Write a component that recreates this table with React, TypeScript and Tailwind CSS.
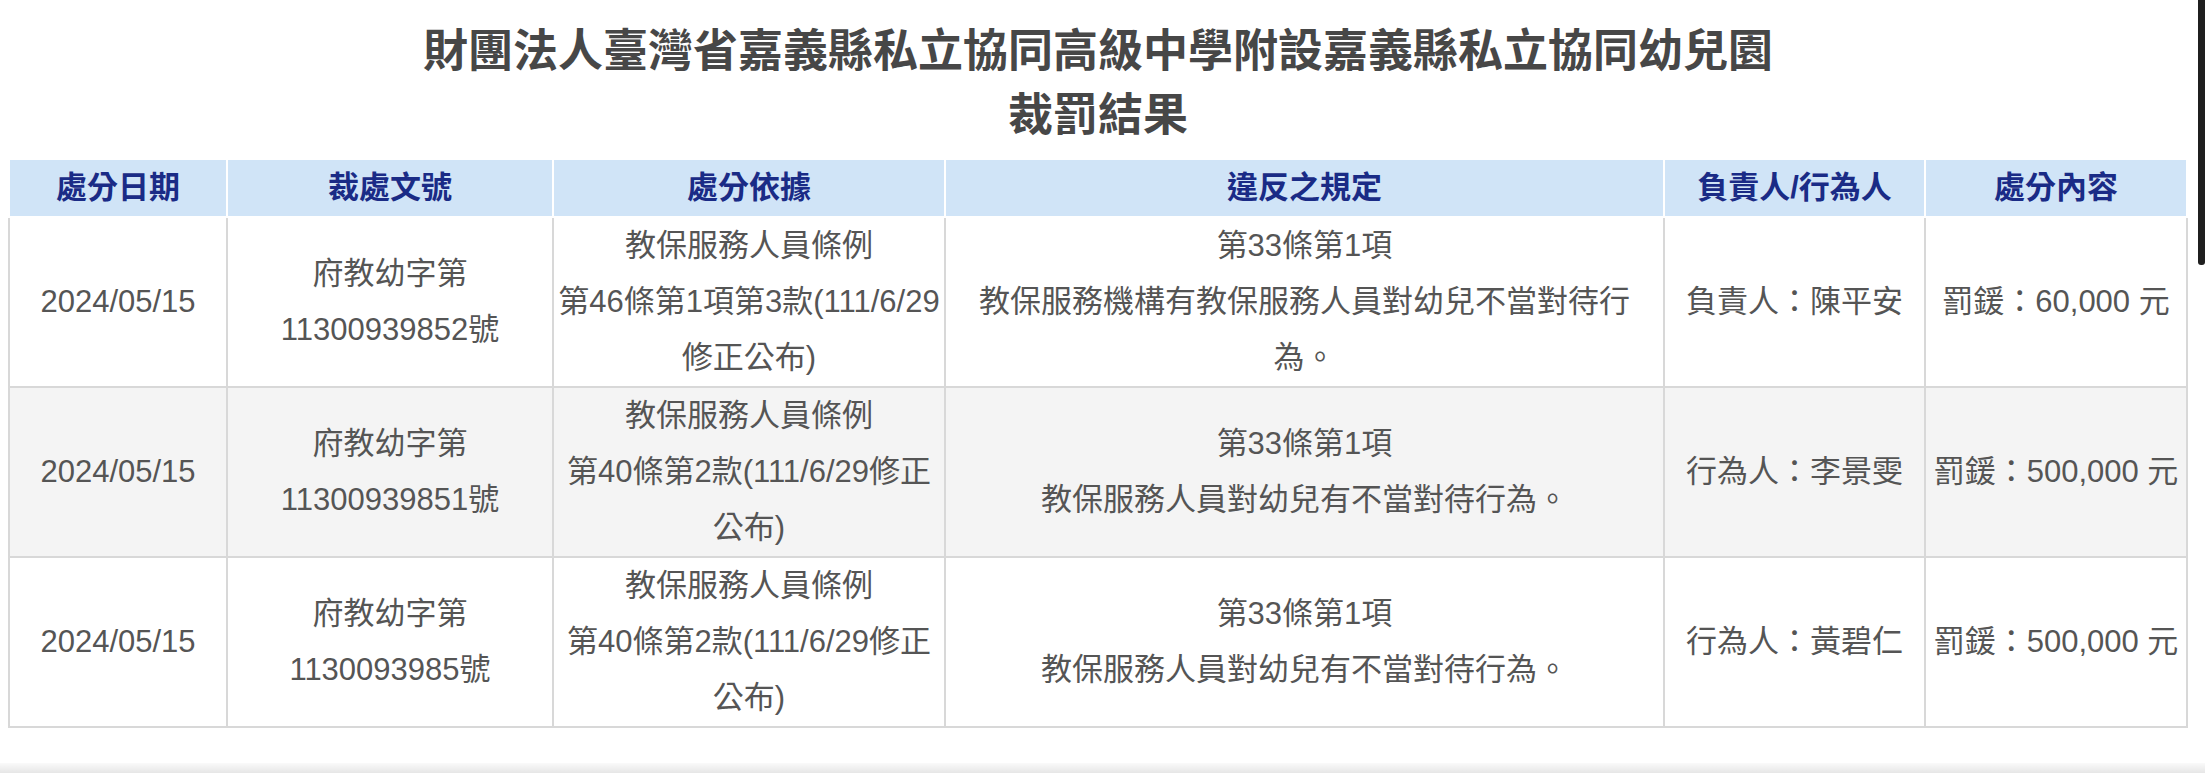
import React from "react";

type Row = {
  date: string;
  doc: string[];
  basis: string[];
  rule: string[];
  person: string;
  penalty: string;
  bg: string;
};

const rows: Row[] = [
  {
    date: "2024/05/15",
    doc: ["府教幼字第", "11300939852號"],
    basis: ["教保服務人員條例", "第46條第1項第3款(111/6/29", "修正公布)"],
    rule: ["第33條第1項", "教保服務機構有教保服務人員對幼兒不當對待行", "為。"],
    person: "負責人：陳平安",
    penalty: "罰鍰：60,000 元",
    bg: "bg-white",
  },
  {
    date: "2024/05/15",
    doc: ["府教幼字第", "11300939851號"],
    basis: ["教保服務人員條例", "第40條第2款(111/6/29修正", "公布)"],
    rule: ["第33條第1項", "教保服務人員對幼兒有不當對待行為。"],
    person: "行為人：李景雯",
    penalty: "罰鍰：500,000 元",
    bg: "bg-[#f4f4f4]",
  },
  {
    date: "2024/05/15",
    doc: ["府教幼字第", "1130093985號"],
    basis: ["教保服務人員條例", "第40條第2款(111/6/29修正", "公布)"],
    rule: ["第33條第1項", "教保服務人員對幼兒有不當對待行為。"],
    person: "行為人：黃碧仁",
    penalty: "罰鍰：500,000 元",
    bg: "bg-white",
  },
];

const headers = ["處分日期", "裁處文號", "處分依據", "違反之規定", "負責人/行為人", "處分內容"];

function Lines({ lines }: { lines: string[] }) {
  return (
    <>
      {lines.map((l, i) => (
        <React.Fragment key={i}>
          {i > 0 && <br />}
          {l}
        </React.Fragment>
      ))}
    </>
  );
}

export default function App() {
  const td =
    "border-2 border-[#d8d8d8] p-0 text-center align-middle whitespace-nowrap";
  return (
    <div
      className="flex h-[773px] w-[2205px] flex-col overflow-hidden bg-white"
      style={{ fontFamily: '"Liberation Sans", "Noto Sans CJK TC", sans-serif' }}
    >
      <div className="flex flex-1">
        <div className="w-[2196px]">
          <h1 className="pt-[20px] text-center text-[45px] font-bold leading-[64px] text-[#474747]">
            財團法人臺灣省嘉義縣私立協同高級中學附設嘉義縣私立協同幼兒園
            <br />
            裁罰結果
          </h1>
          <table className="ml-[8px] mt-[10px] w-[2180px] table-fixed border-collapse text-[31px] leading-[56px] text-[#555555]">
            <colgroup>
              <col className="w-[218px]" />
              <col className="w-[326px]" />
              <col className="w-[392px]" />
              <col className="w-[719px]" />
              <col className="w-[261px]" />
              <col className="w-[262px]" />
            </colgroup>
            <thead>
              <tr>
                {headers.map((h) => (
                  <th
                    key={h}
                    className="border-2 border-white bg-[#d0e4f7] p-0 text-center font-bold text-[#1a2b86] whitespace-nowrap"
                  >
                    {h}
                  </th>
                ))}
              </tr>
            </thead>
            <tbody>
              {rows.map((r, i) => (
                <tr key={i} className={`h-[168px] ${r.bg}`}>
                  <td className={td}>{r.date}</td>
                  <td className={td}>
                    <Lines lines={r.doc} />
                  </td>
                  <td className={td}>
                    <Lines lines={r.basis} />
                  </td>
                  <td className={td}>
                    <Lines lines={r.rule} />
                  </td>
                  <td className={td}>{r.person}</td>
                  <td className={td}>{r.penalty}</td>
                </tr>
              ))}
            </tbody>
          </table>
        </div>
        <div className="w-[9px] pl-[2px]">
          <div className="h-[265px] w-[7px] rounded-b-[3px] bg-[#1f1f1f]" />
        </div>
      </div>
      <div className="h-[10px] bg-gradient-to-b from-[#fafafa] to-[#e6e6e6]" />
    </div>
  );
}
